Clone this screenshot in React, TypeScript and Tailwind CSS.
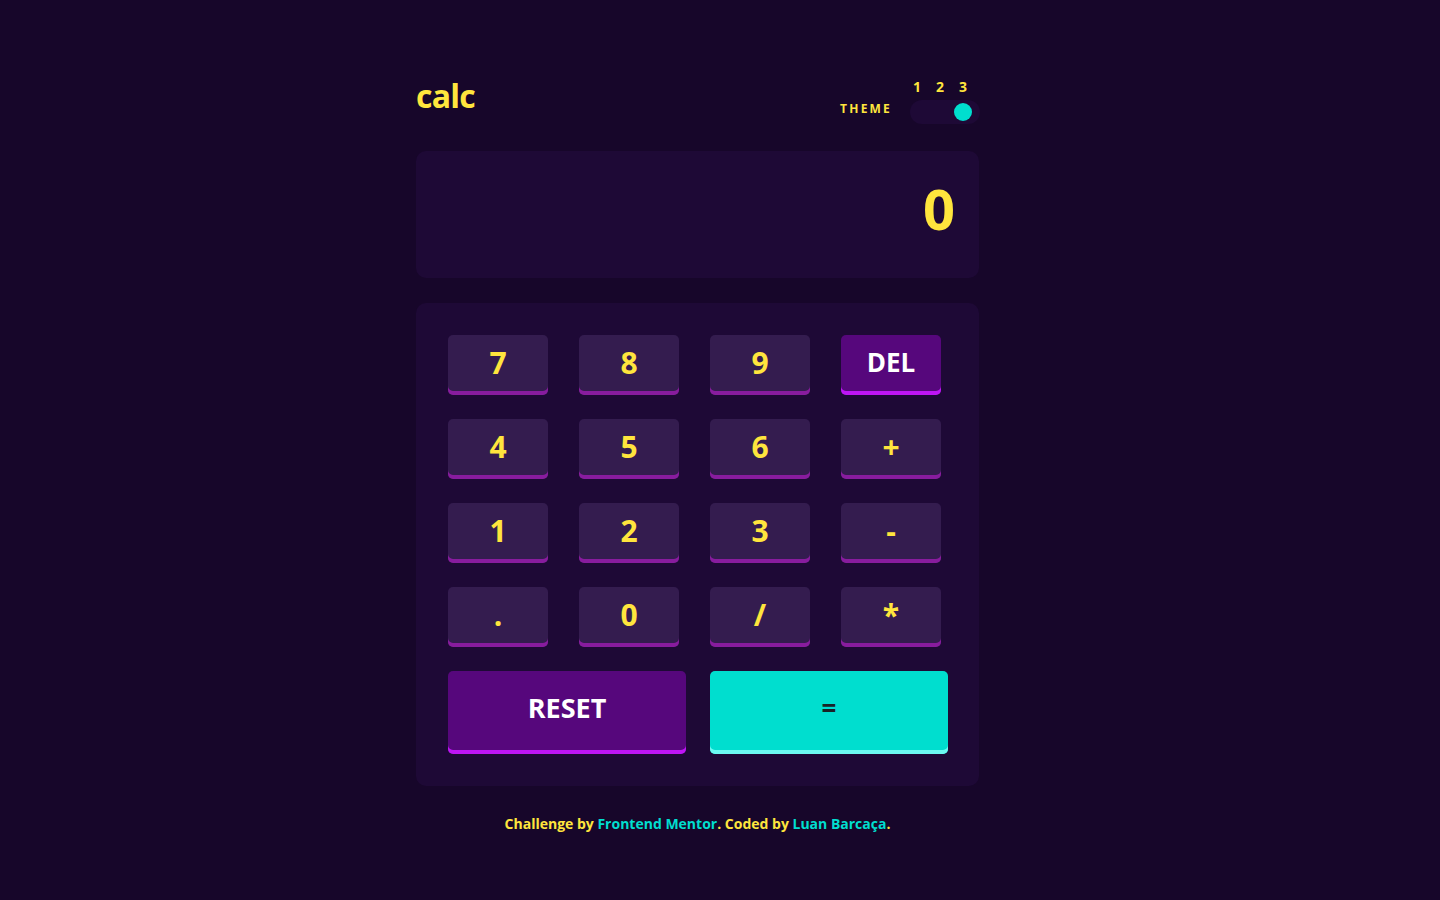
import React from 'react';

export default function App() {
  const rows = [
    ['7', '8', '9', 'DEL'],
    ['4', '5', '6', '+'],
    ['1', '2', '3', '-'],
    ['.', '0', '/', '*'],
  ];

  return (
    <div className="min-h-screen w-full bg-[#17062a] font-['Open_Sans',sans-serif] font-bold">
      <div className="ml-[416px] w-[563px] pt-[76px] pb-[60px]">
        {/* Header */}
        <div className="flex items-end justify-between pb-[27px]">
          <h1 className="text-[32px] leading-[40px] text-[#ffe53d] tracking-tight mb-[8px]">calc</h1>
          <div className="flex items-end gap-[18px] mr-[-1px]">
            <span className="text-[12px] tracking-[2.2px] text-[#ffe53d] leading-none mb-[9px]">THEME</span>
            <div className="flex flex-col">
              <div className="flex justify-between text-[14px] leading-none text-[#ffe53d] mb-[6px] pl-[3px] pr-[13px]">
                <span>1</span>
                <span>2</span>
                <span>3</span>
              </div>
              <div className="w-[70px] h-[24px] rounded-full bg-[#1e0936] flex items-center justify-end px-[8px]">
                <div className="w-[18px] h-[18px] rounded-full bg-[#00decf]"></div>
              </div>
            </div>
          </div>
        </div>

        {/* Display */}
        <div className="h-[127px] rounded-[10px] bg-[#1e0936] flex items-center justify-end px-[24px]">
          <span className="text-[56px] text-[#ffe53d] leading-none mt-[-14px]">0</span>
        </div>

        {/* Keypad */}
        <div className="mt-[25px] rounded-[10px] bg-[#1e0936] p-[32px]">
          <div className="grid grid-cols-[repeat(4,100px)] gap-x-[31px] gap-y-[24px]">
            {rows.flat().map((k) =>
              k === 'DEL' ? (
                <button
                  key={k}
                  className="h-[60px] rounded-[5px] bg-[#56077c] shadow-[inset_0_-4px_0_#be15f4] text-white text-[26px] pb-[6px]"
                >
                  DEL
                </button>
              ) : (
                <button
                  key={k}
                  className="h-[60px] rounded-[5px] bg-[#341c4f] shadow-[inset_0_-4px_0_#881c9e] text-[#ffe53d] text-[30px] pb-[6px]"
                >
                  {k}
                </button>
              )
            )}
          </div>
          <div className="grid grid-cols-2 gap-x-[24px] mt-[24px] w-[500px]">
            <button className="h-[83px] rounded-[5px] bg-[#56077c] shadow-[inset_0_-4px_0_#be15f4] text-white text-[27px] pb-[9px]">
              RESET
            </button>
            <button className="h-[83px] rounded-[5px] bg-[#00decf] shadow-[inset_0_-4px_0_#6cf9f1] text-[#1a2327] text-[26px] pb-[9px]">
              =
            </button>
          </div>
        </div>

        {/* Footer */}
        <p className="mt-[27px] text-center text-[14px] text-[#ffe53d]">
          Challenge by <span className="text-[#00decf]">Frontend Mentor</span>. Coded by{' '}
          <span className="text-[#00decf]">Luan Barcaça</span>.
        </p>
      </div>
    </div>
  );
}
